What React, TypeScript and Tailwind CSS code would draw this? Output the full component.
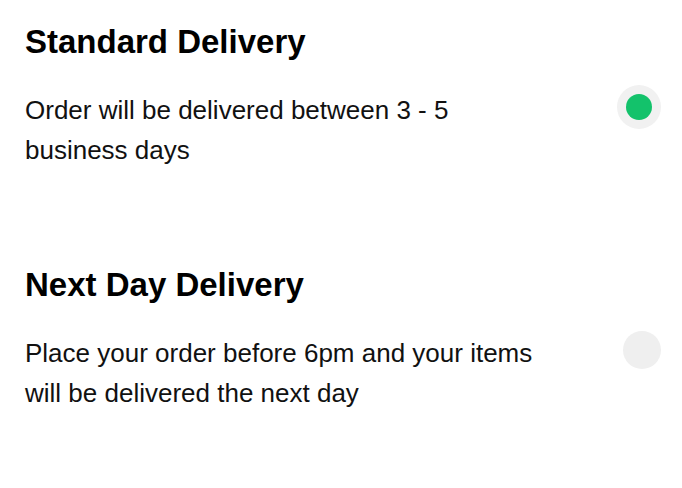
const options = [
  {
    title: "Standard Delivery",
    text: "Order will be delivered between 3 - 5 business days",
    selected: true,
  },
  {
    title: "Next Day Delivery",
    text: "Place your order before 6pm and your items will be delivered the next day",
    selected: false,
  },
];

export default function App() {
  return (
    <div className="min-h-screen w-[682px] bg-white pl-[25px] pr-[21px] pt-[22px] font-['Liberation_Sans',Arial,sans-serif] text-[#111]">
      <div className="flex flex-col gap-[95px]">
        {options.map((o) => (
          <section key={o.title}>
            <h2 className="text-[33px] font-bold leading-[40px] text-black">
              {o.title}
            </h2>
            <div className="mt-[28px] flex items-start justify-between">
              <p className="w-[515px] text-[26px] leading-[40px]">{o.text}</p>
              <div className="-mt-[5px] flex h-[44px] w-[44px] items-center justify-end">
                {o.selected ? (
                  <div className="flex h-[44px] w-[44px] items-center justify-center rounded-full bg-[#f1f1f1]">
                    <div className="h-[26px] w-[26px] rounded-full bg-[#13c26b]" />
                  </div>
                ) : (
                  <div className="h-[38px] w-[38px] rounded-full bg-[#efefef]" />
                )}
              </div>
            </div>
          </section>
        ))}
      </div>
    </div>
  );
}
